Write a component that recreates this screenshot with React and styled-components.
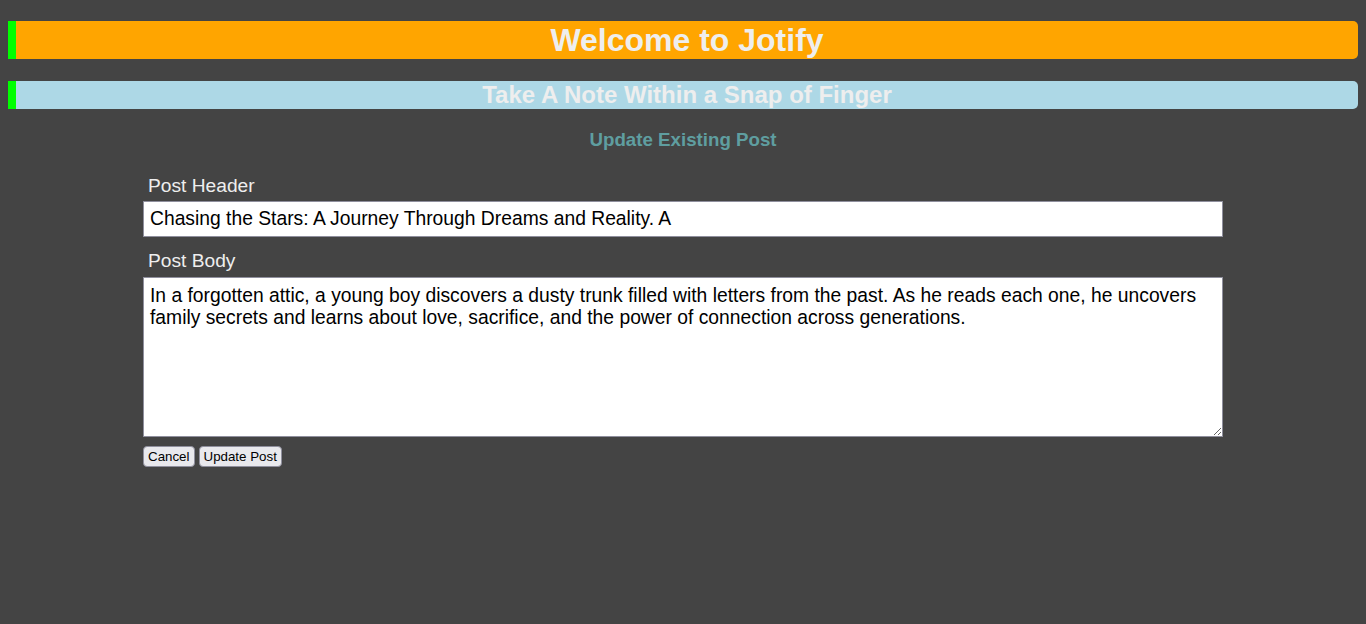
import React from "react"
import styled, { createGlobalStyle } from "styled-components"

//  Global
const GlobalStyle = createGlobalStyle`
  body {
    margin: 0;
    padding: 21px 8px 0;
    background: #444444;
    font-family: "Liberation Sans", Arial, sans-serif;
    color: #eeeeee;
  }
`

//  SECTION: Banners
const Banner = styled.h1`
  margin: 0 0 ${props => props.$gap || 0}px;
  height: ${props => props.$height}px;
  line-height: ${props => props.$height}px;
  font-size: ${props => props.$size}px;
  font-weight: 700;
  text-align: center;
  color: #eeeeee;
  background: ${props => props.$bg};
  border-left: 8px solid #00ff00;
  border-radius: 0 5px 5px 0;
`

const SubTitle = styled.h3`
  margin: 20px 0 24px;
  font-size: 18.72px;
  font-weight: 700;
  text-align: center;
  color: cadetblue;
`

//  SECTION: Form
const Form = styled.form`
  width: 80%;
  margin: 0 auto;
  display: flex;
  flex-direction: column;
`

const Label = styled.label`
  font-size: 19.2px;
  padding-left: 5px;
  margin-bottom: ${props => props.$gap}px;
  color: #eeeeee;
`

const TextInput = styled.input`
  box-sizing: border-box;
  height: 36px;
  padding: 0 6px;
  margin-bottom: 13px;
  font-family: "Liberation Sans", Arial, sans-serif;
  font-size: 19.3px;
  color: #000;
  background: #fff;
  border: 1px solid #8f8f9d;
  outline: none;
`

const TextArea = styled.textarea`
  box-sizing: border-box;
  height: 160px;
  padding: 7px 6px;
  margin: 0 0 9px;
  font-family: "Liberation Sans", Arial, sans-serif;
  font-size: 19.3px;
  color: #000;
  background: #fff;
  border: 1px solid #8f8f9d;
  outline: none;
`

const Actions = styled.div`
  display: flex;
  gap: 4px;
`

const Button = styled.button`
  font-family: "Liberation Sans", Arial, sans-serif;
  font-size: 13.33px;
  height: 21px;
  padding: 1px 4px;
  color: #000;
  background: #e9e9ed;
  border: 1px solid #8f8f9d;
  border-radius: 4px;
`

const App = () => {
  return (
    <>
      <GlobalStyle />
      <Banner $bg="#ffa500" $size={32} $height={38} $gap={22}>
        Welcome to Jotify
      </Banner>
      <Banner as="h2" $bg="#add8e6" $size={24} $height={28}>
        Take A Note Within a Snap of Finger
      </Banner>

      <SubTitle>Update Existing Post</SubTitle>

      <Form onSubmit={e => e.preventDefault()}>
        <Label htmlFor="header" $gap={4}>Post Header</Label>
        <TextInput
          id="header"
          defaultValue="Chasing the Stars: A Journey Through Dreams and Reality. A"
        />
        <Label htmlFor="body" $gap={5}>Post Body</Label>
        <TextArea
          id="body"
          defaultValue="In a forgotten attic, a young boy discovers a dusty trunk filled with letters from the past. As he reads each one, he uncovers family secrets and learns about love, sacrifice, and the power of connection across generations."
        />
        <Actions>
          <Button type="button">Cancel</Button>
          <Button type="submit">Update Post</Button>
        </Actions>
      </Form>
    </>
  )
}

export default App
